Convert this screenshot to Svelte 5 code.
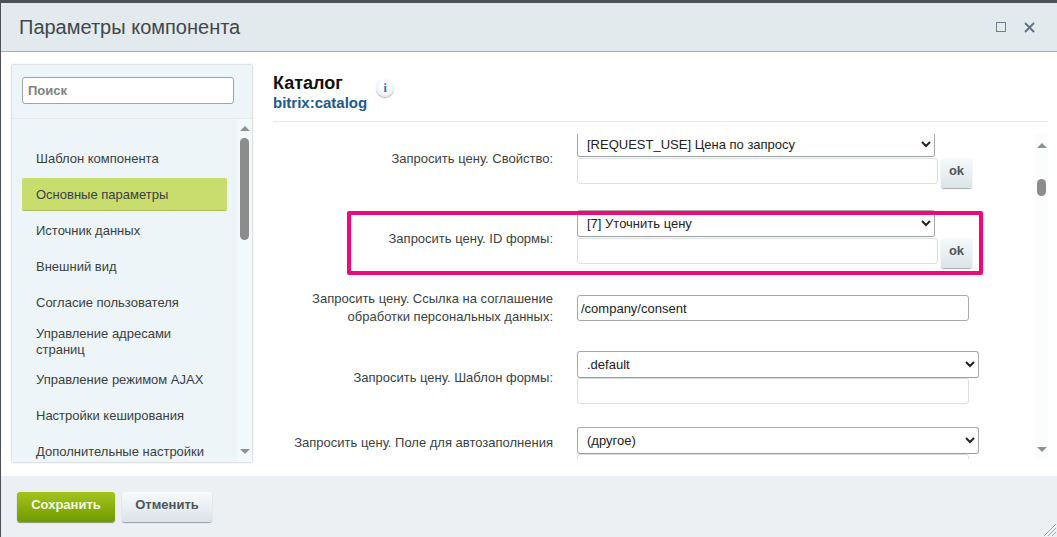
<script lang="ts">
  const sections = [
    { label: 'Шаблон компонента' },
    { label: 'Основные параметры', active: true },
    { label: 'Источник данных' },
    { label: 'Внешний вид' },
    { label: 'Согласие пользователя' },
    { label: 'Управление адресами страниц', wrap: true },
    { label: 'Управление режимом AJAX' },
    { label: 'Настройки кеширования' },
    { label: 'Дополнительные настройки' },
  ];
</script>

<div class="page">
  <div class="dialog">
    <header class="head">
      <h1>Параметры компонента</h1>
      <div class="win-btns">
        <span class="win-max"></span>
        <svg class="win-close" width="11" height="11" viewBox="0 0 11 11">
          <path d="M1 1l9 9M10 1l-9 9" stroke="#5f7283" stroke-width="1.8" fill="none" />
        </svg>
      </div>
    </header>

    <div class="content">
      <aside class="side">
        <div class="search-box">
          <input class="search" placeholder="Поиск" />
        </div>
        <div class="side-scroll">
          <ul class="menu">
            {#each sections as s}
              <li class:active={s.active} class:wrap={s.wrap}>{s.label}</li>
            {/each}
          </ul>
          <div class="bar">
            <span class="arr up"></span>
            <span class="thumb"></span>
            <span class="arr down"></span>
          </div>
        </div>
      </aside>

      <main class="main">
        <div class="title">
          <div>
            <div class="name">Каталог</div>
            <div class="code">bitrix:catalog</div>
          </div>
          <span class="info">i</span>
        </div>

        <div class="form-wrap">
          <div class="form">
            <div class="form-inner">
              <div class="row r1">
                <label for="f1">Запросить цену. Свойство:</label>
                <div class="ctl">
                  <select id="f1" class="sel-s"><option>[REQUEST_USE] Цена по запросу</option></select>
                  <div class="with-ok"><input class="inp-s" /><button class="ok">ok</button></div>
                </div>
              </div>
              <div class="row r2">
                <label for="f2">Запросить цену. ID формы:</label>
                <div class="ctl">
                  <select id="f2" class="sel-s"><option>[7] Уточнить цену</option></select>
                  <div class="with-ok"><input class="inp-s" /><button class="ok">ok</button></div>
                </div>
              </div>
              <div class="row r3">
                <label for="f3">Запросить цену. Ссылка на соглашение<br />обработки персональных данных:</label>
                <div class="ctl">
                  <input id="f3" class="inp-l dark" value="/company/consent" />
                </div>
              </div>
              <div class="row r4">
                <label for="f4">Запросить цену. Шаблон формы:</label>
                <div class="ctl">
                  <select id="f4" class="sel-l"><option>.default</option></select>
                  <input class="inp-l" />
                </div>
              </div>
              <div class="row r5">
                <label for="f5">Запросить цену. Поле для автозаполнения</label>
                <div class="ctl">
                  <select id="f5" class="sel-l"><option>(другое)</option></select>
                  <input class="inp-l" />
                </div>
              </div>
            </div>
          </div>
          <div class="bar form-bar">
            <span class="arr up"></span>
            <span class="thumb"></span>
            <span class="arr down"></span>
          </div>
        </div>
      </main>
    </div>

    <footer class="foot">
      <button class="save">Сохранить</button>
      <button class="cancel">Отменить</button>
      <svg class="grip" width="13" height="13" viewBox="0 0 13 13">
        <path d="M1 13L13 1M5 13l8-8M9 13l4-4" stroke="#a3a9ad" stroke-width="1" fill="none" />
      </svg>
    </footer>
  </div>

  <div class="mark"></div>
</div>

<style>
  :global(body) {
    margin: 0;
    font-family: 'Liberation Sans', Arial, sans-serif;
  }

  .page {
    position: relative;
    height: 537px;
    padding-top: 3px;
    box-sizing: border-box;
    background: #4b5156;
    overflow: hidden;
  }

  .dialog {
    display: flex;
    flex-direction: column;
    height: 100%;
    margin-left: 1px;
    background: #fff;
  }

  .head {
    display: flex;
    justify-content: space-between;
    align-items: center;
    flex: none;
    height: 48px;
    padding: 0 22px 0 18px;
    background: #e3eaee;
    border-bottom: 1px solid #a5abaf;
  }

  h1 {
    margin: 0;
    font-size: 20px;
    font-weight: 400;
    color: #40474c;
  }

  .win-btns {
    display: flex;
    align-items: center;
    gap: 18px;
  }

  .win-max {
    width: 8px;
    height: 8px;
    border: 1px solid #6d7f8e;
  }

  .content {
    display: flex;
    flex: 1;
    min-height: 0;
    padding: 13px 9px 14px 11px;
  }

  .side {
    flex: none;
    display: flex;
    flex-direction: column;
    width: 240px;
    height: 397px;
    box-sizing: border-box;
    background: #eef5f9;
    box-shadow: 0 0 2px rgba(80, 90, 100, 0.55);
  }

  .search-box {
    flex: none;
    height: 54px;
    box-sizing: border-box;
    padding: 12px 18px 0 10px;
    border-bottom: 1px solid #e5ebef;
  }

  .search {
    display: block;
    width: 100%;
    height: 27px;
    box-sizing: border-box;
    padding: 0 5px;
    border: 1px solid #9da3a7;
    border-radius: 3px;
    background: #fff;
    font: bold 13px 'Liberation Sans', Arial, sans-serif;
    color: #7d8285;
  }

  .search::placeholder {
    color: #7d8285;
    opacity: 1;
  }

  .side-scroll {
    display: flex;
    flex: 1;
    min-height: 0;
    overflow: hidden;
  }

  .menu {
    flex: 1;
    margin: 0;
    padding: 22px 0 0 10px;
    list-style: none;
  }

  .menu li {
    display: flex;
    align-items: center;
    box-sizing: border-box;
    width: 205px;
    height: 36px;
    padding-left: 14px;
    font-size: 13px;
    line-height: 16px;
    color: #3a3f42;
  }

  .menu li.active {
    height: 33px;
    margin-top: 1px;
    margin-bottom: 2px;
    padding-top: 2px;
    background: #c9dd6f;
    border-bottom: 1px solid #aebf5c;
    border-radius: 2px;
  }

  .menu li.wrap {
    height: 41px;
    padding-right: 30px;
  }

  .bar {
    position: relative;
    flex: none;
    width: 15px;
    background: #f3f8fb;
  }

  .thumb {
    position: absolute;
    left: 3px;
    top: 19px;
    width: 9px;
    height: 102px;
    border-radius: 5px;
    background: #8c8c8c;
  }

  .arr {
    position: absolute;
    left: 3px;
    border-left: 5px solid transparent;
    border-right: 5px solid transparent;
  }

  .arr.up {
    top: 7px;
    border-bottom: 5px solid #8f9295;
  }

  .arr.down {
    bottom: 8px;
    border-top: 5px solid #8f9295;
  }

  .main {
    flex: 1;
    min-width: 0;
    margin-left: 21px;
  }

  .title {
    display: flex;
    gap: 9px;
    height: 57px;
    box-sizing: border-box;
    padding-top: 7px;
    border-bottom: 1px solid #e6e9eb;
  }

  .name {
    font-size: 18px;
    line-height: 22px;
    font-weight: 700;
    color: #111;
  }

  .code {
    font-size: 15px;
    line-height: 17px;
    font-weight: 700;
    color: #1c5a8e;
  }

  .info {
    width: 18px;
    height: 18px;
    margin-top: 7px;
    border-radius: 50%;
    background: radial-gradient(circle at 50% 40%, #fbfdfe 40%, #d3dde4);
    box-shadow: 0 1px 1px rgba(90, 100, 110, 0.5);
    text-align: center;
    font: bold 12px/18px 'Liberation Serif', serif;
    color: #2c6ea5;
  }

  .form-wrap {
    display: flex;
    height: 325px;
    margin-top: 12px;
  }

  .form {
    flex: 1;
    min-width: 0;
    overflow: hidden;
  }

  .form-inner {
    margin-top: -4px;
  }

  .row {
    display: grid;
    grid-template-columns: 280px 1fr;
    column-gap: 24px;
    align-items: center;
  }

  .r1 select { height: 26px; margin-top: 1px; }
  .r2 { margin-top: 22px; }
  .r3 { margin-top: 22px; }
  .r4 { margin-top: 25px; }
  .r5 { margin-top: 23px; align-items: start; }
  .r5 label { padding-top: 7px; }

  label {
    text-align: right;
    font-size: 13px;
    line-height: 18px;
    color: #3a3f42;
  }

  .ctl {
    display: flex;
    flex-direction: column;
    align-items: flex-start;
  }

  select {
    display: block;
    height: 27px;
    box-sizing: border-box;
    padding: 0 5px;
    border: 1px solid #a7a9ab;
    border-bottom-color: #9a9c9e;
    border-radius: 3px;
    background: #fff;
    font: 13px 'Liberation Sans', Arial, sans-serif;
    color: #222;
  }

  .sel-s { width: 358px; }
  .sel-l { width: 402px; }

  input {
    outline: none;
  }

  .ctl input {
    display: block;
    height: 26px;
    box-sizing: border-box;
    padding: 0 3px;
    border: 1px solid #dcdfe0;
    border-radius: 3px;
    background: #fff;
    font: 13px 'Liberation Sans', Arial, sans-serif;
    color: #222;
  }

  .inp-s { width: 361px; }
  .inp-l { width: 392px; }
  .ctl input.dark { border-color: #a5a8aa; }

  .with-ok {
    display: flex;
    gap: 3px;
    margin-top: 1px;
  }

  .ok {
    width: 31px;
    height: 30px;
    padding: 0 0 6px;
    border: none;
    border-radius: 3px;
    background: linear-gradient(#f6f9fa, #dce4e8);
    box-shadow: 0 1px 1px rgba(90, 100, 110, 0.55);
    font: bold 13px 'Liberation Sans', Arial, sans-serif;
    color: #4d5559;
  }

  .form-bar {
    width: 13px;
    background: #fbfcfc;
  }

  .form-bar .thumb {
    left: 2px;
    top: 45px;
    width: 9px;
    height: 17px;
  }

  .form-bar .arr {
    left: 2px;
  }

  .form-bar .arr.up { top: 9px; }
  .form-bar .arr.down { bottom: 7px; }

  .foot {
    position: relative;
    display: flex;
    align-items: center;
    gap: 7px;
    flex: none;
    height: 61px;
    padding: 0 0 0 16px;
    background: #ecf0f3;
  }

  .foot button {
    height: 30px;
    padding: 0 0 5px;
    border: none;
    border-radius: 3px;
    font: bold 13px 'Liberation Sans', Arial, sans-serif;
  }

  .save {
    width: 98px;
    background: linear-gradient(#a4c41c, #6f9a00);
    box-shadow: 0 1px 1px rgba(70, 90, 20, 0.6);
    color: #f4f8e2;
  }

  .cancel {
    width: 90px;
    background: linear-gradient(#f7fafb, #dbe3e8);
    box-shadow: 0 1px 1px rgba(90, 100, 110, 0.6);
    color: #4d5559;
  }

  .grip {
    position: absolute;
    right: 1px;
    bottom: 1px;
  }

  .mark {
    position: absolute;
    left: 347px;
    top: 211px;
    width: 636px;
    height: 64px;
    box-sizing: border-box;
    border: 4px solid #ec0a78;
    border-radius: 2px;
    pointer-events: none;
  }
</style>
